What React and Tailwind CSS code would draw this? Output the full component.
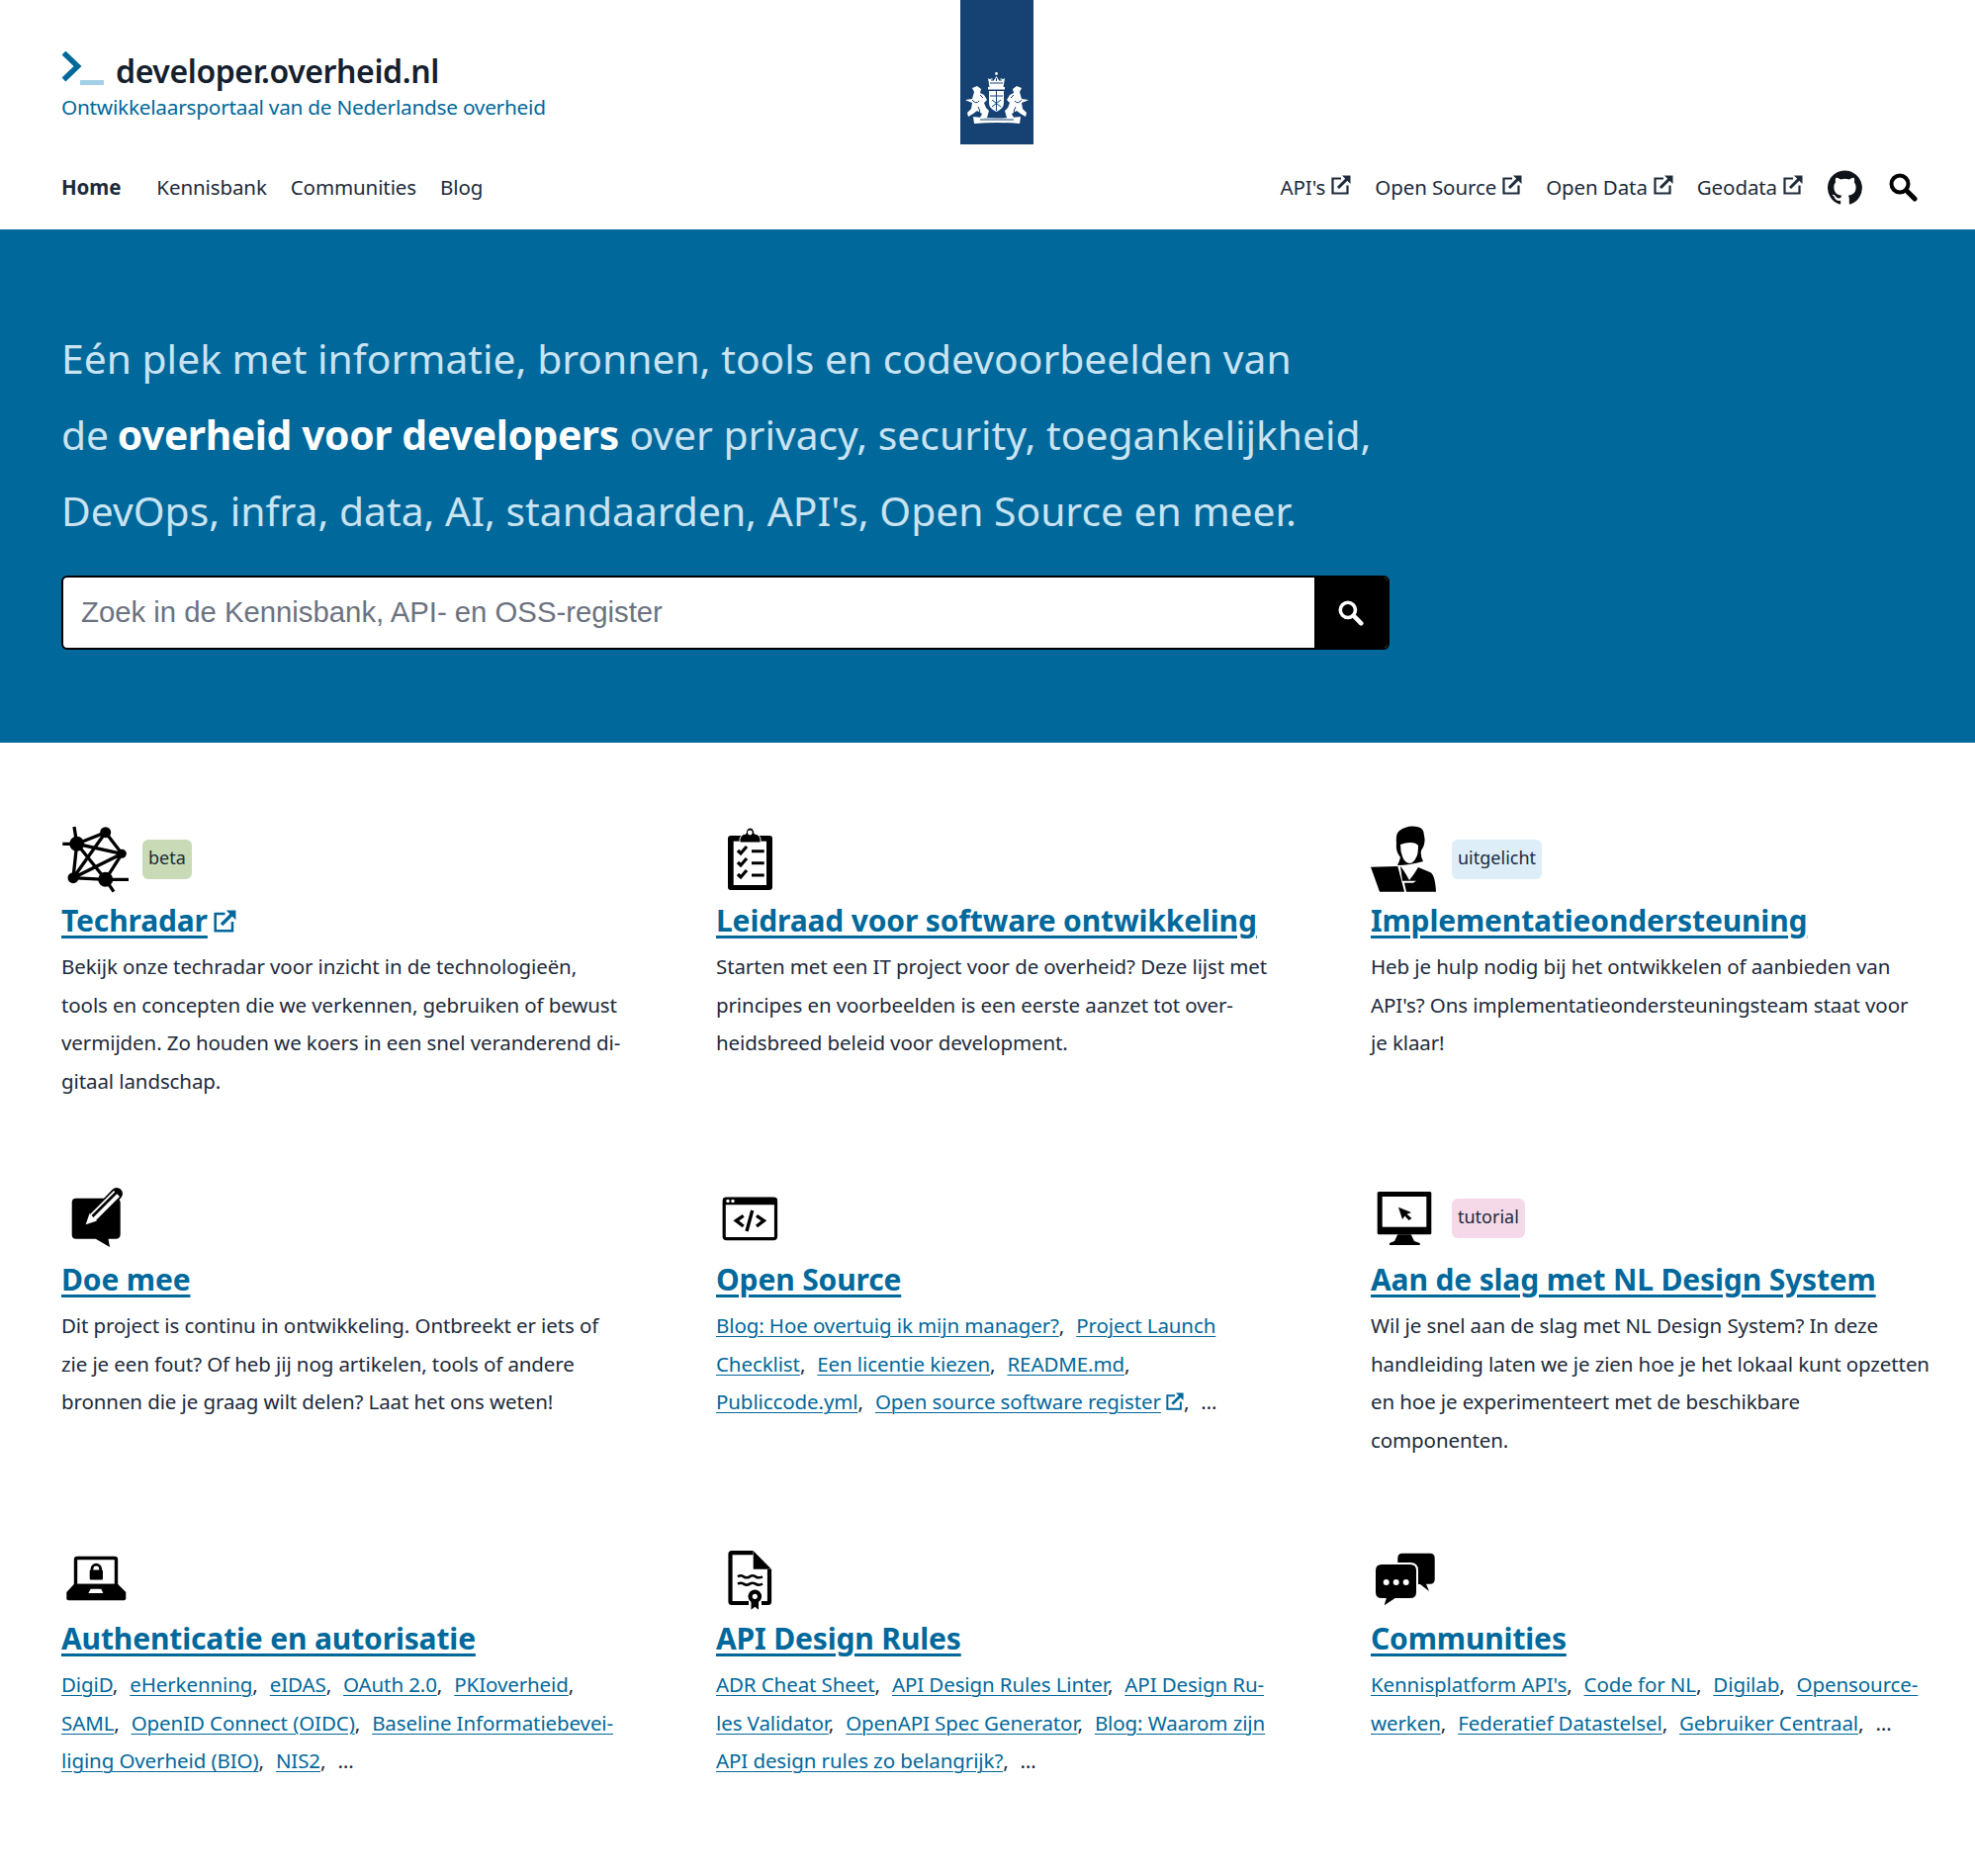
import React from "react";

const ExtIcon = ({ className = "" }) => (
  <svg viewBox="0 0 20 20" className={className} fill="none" stroke="currentColor">
    <path d="M10 3.500H1.500V18.500H16.500V10.500" strokeWidth="2.200" />
    <path d="M7 13L16 4" strokeWidth="3" />
    <path d="M11 0.500H19.500V9Z" fill="currentColor" stroke="none" />
  </svg>
);

const SearchIcon = ({ className = "" }) => (
  <svg viewBox="0 0 29 29" className={className} fill="none" stroke="currentColor">
    <circle cx="11" cy="11" r="8.500" strokeWidth="4" />
    <path d="M17.500 17.500L26 26" strokeWidth="5" strokeLinecap="round" />
  </svg>
);

const GithubIcon = ({ className = "" }) => (
  <svg viewBox="0 0 24 24" className={className} fill="currentColor">
    <path d="M12 .3a12 12 0 0 0-3.800 23.380c.6.120.830-.260.830-.570l-.020-2.050c-3.340.720-4.040-1.610-4.040-1.610-.550-1.390-1.330-1.760-1.330-1.760-1.090-.740.080-.730.080-.730 1.200.090 1.840 1.240 1.840 1.240 1.070 1.830 2.810 1.300 3.500 1 .1-.780.420-1.310.760-1.610-2.670-.3-5.470-1.330-5.470-5.930 0-1.310.470-2.380 1.240-3.220-.140-.3-.540-1.520.1-3.180 0 0 1-.320 3.300 1.230a11.500 11.500 0 0 1 6 0c2.280-1.550 3.290-1.230 3.290-1.230.640 1.660.240 2.880.120 3.180a4.650 4.650 0 0 1 1.230 3.220c0 4.610-2.800 5.630-5.480 5.920.420.360.810 1.100.810 2.220l-.010 3.290c0 .310.2.690.820.570A12 12 0 0 0 12 .3" />
  </svg>
);

const Crest = () => (
  <svg viewBox="0 0 74 146" className="h-[146px] w-[74px]">
    <rect width="74" height="146" fill="#154273" />
    <g fill="#fff">
      <circle cx="36.500" cy="74.500" r="1.400" />
      <path d="M28 79q2 2 4 0l1.500 3 3-5 3 5 1.500-3q2 2 4 0l-1.500 9h-14z" />
      <rect x="28" y="88" width="17" height="2.500" />
      <path d="M29 92h15v12q0 6-7.500 9q-7.500-3-7.500-9z" />
      <path d="M5 101l7-1 2-7-2-4 5-2 4 3-1 4 4 2 3 5-3 3 2 5 3 3-2 7h-7l2-4-5-3-4 3-5 3-1-4 4-4 1-6-5-2z" />
      <path d="M69 101l-7-1-2-7 2-4-5-2-4 3 1 4-4 2-3 5 3 3-2 5-3 3 2 7h7l-2-4 5-3 4 3 5 3 1-4-4-4-1-6 5-2z" />
      <path d="M13 118q24 3 48 0l-1 7q-23-2-46 0z" />
    </g>
    <g stroke="#154273" strokeWidth="1" fill="none">
      <path d="M30 84h13M32 82v-2M36.500 82v-3M41 82v-2" />
      <path d="M30 97h13M36.500 92v20M32 101l9 7M41 101l-9 7" />
      <path d="M12 101q4 5 7 1M62 101q-4 5-7 1M18 108q3 4 1 8M56 108q-3 4-1 8M20 96l3 3M54 96l-3 3" />
      <path d="M20 121h34" />
    </g>
  </svg>
);

const base = { viewBox: "0 0 68 68", className: "h-[68px] w-[68px] shrink-0" };

const RadarIcon = () => (
  <svg {...base} fill="#000">
    <g stroke="#000" strokeWidth="3.300" fill="none">
      <path d="M15.700 18.300L44.700 6.700L61.300 28.300L44.700 54.300L12 52.700L15.700 18.300L61.300 28.300L12 52.700L44.700 6.700M15.700 18.300L44.700 54.300" />
      <path d="M15.700 18.300L13 1M15.700 18.300H1.300M44.700 54.300H68M44.700 54.300L53 66.700" />
    </g>
    <circle cx="15.700" cy="18.300" r="7.500" />
    <circle cx="44.700" cy="6.700" r="5.500" />
    <circle cx="61.300" cy="28.300" r="4.500" />
    <circle cx="12" cy="52.700" r="5.500" />
    <circle cx="44.700" cy="54.300" r="7.500" />
  </svg>
);

const ClipboardIcon = () => (
  <svg {...base}>
    <rect x="12" y="10" width="45" height="55" rx="3" fill="#000" />
    <rect x="17.700" y="15.700" width="33.300" height="44.300" fill="#fff" />
    <path d="M24 17q-1-8 6-9q1-6 4.500-6t4.500 6q7 1 6 9z" fill="#000" stroke="#fff" strokeWidth="1" />
    <circle cx="34.300" cy="7" r="2.400" fill="#fff" />
    <path d="M22 25l3 3 6-7M22 37l3 3 6-7M22 49l3 3 6-7" stroke="#000" strokeWidth="3.200" fill="none" />
    <path d="M36 25.700h12.700M36 37.700h12.700M36 50h12.700" stroke="#000" strokeWidth="3" />
  </svg>
);

const PersonIcon = () => (
  <svg {...base}>
    <path d="M27 40q2-4 3-8q-5-6-4-14q-1-10 3-13q8-6 18-4q7 1 7 9q2 8-3 15q-1 6 2 11q-14 4-26 4z" fill="#000" />
    <path d="M30 19q5-2 10-2q6 0 8 3q0 9-2 12q-3 6-7 6q-5-1-7-7q-2-5-2-12z" fill="#fff" />
    <path d="M0 41.700L27.300 41L34 66.700H9z" fill="#000" />
    <path d="M30 41q3 3 9 14q5-6 9-13l12 5q5 2 6 19.700H36l-2-9h9l3-2H32z" fill="#000" />
  </svg>
);

const EditIcon = () => (
  <svg {...base}>
    <path d="M15 13.700H55q4.700 0 4.700 4.700V50q0 4.700-4.700 4.700H47.500L49 63L34.700 54.700H15q-4.300 0-4.300-4.300V18q0-4.300 4.300-4.300z" fill="#000" />
    <path d="M34 32L56 9" stroke="#000" strokeWidth="12" strokeLinecap="round" />
    <path d="M32 33L56 9" stroke="#fff" strokeWidth="8.500" />
    <path d="M31 32.500L56.500 7" stroke="#000" strokeWidth="2.600" />
    <path d="M24.700 40.300L28.500 29L36 36.500z" fill="#fff" />
  </svg>
);

const CodeIcon = () => (
  <svg {...base}>
    <rect x="8.200" y="14" width="52.300" height="40.700" rx="2.500" fill="#fff" stroke="#000" strokeWidth="3.200" />
    <path d="M7 20.300V15q0-2 2-2h50.700q2 0 2 2v5.300z" fill="#000" />
    <circle cx="12" cy="16.500" r="1.700" fill="#fff" />
    <circle cx="17" cy="16.500" r="1.700" fill="#fff" />
    <path d="M27.700 31.300L20.300 36.300L27.700 42M41 31.300L48.400 36.300L41 42M36.700 26L31 47" stroke="#000" strokeWidth="3.400" fill="none" />
  </svg>
);

const MonitorIcon = () => (
  <svg {...base}>
    <rect x="6.700" y="7" width="54.600" height="43.300" rx="1.500" fill="#000" />
    <rect x="11.700" y="12" width="44.600" height="30.700" fill="#fff" />
    <path d="M27.300 50.300H40.700L44 57L49.700 59V61H19V59L24 57z" fill="#000" />
    <path d="M28 22.700L41 28L36.500 29.800L41.500 34L38.500 36L34.500 31.500L32 35z" fill="#000" />
  </svg>
);

const LaptopIcon = () => (
  <svg {...base}>
    <rect x="14.500" y="14.500" width="41" height="28" rx="1.500" fill="#fff" stroke="#000" strokeWidth="3.400" />
    <path d="M13 40.700H57L65.300 49V55.300q0 2-2 2H7.300q-2 0-2-2V49z" fill="#000" />
    <path d="M29.700 45.700H40.300L42.300 50H27.300z" fill="#fff" />
    <rect x="28.700" y="26.500" width="13.300" height="10" rx="1" fill="#000" />
    <path d="M31 27v-1.500a4.300 4.300 0 0 1 8.600 0V27" stroke="#000" strokeWidth="2.800" fill="none" />
  </svg>
);

const DocIcon = () => (
  <svg {...base}>
    <path d="M37.500 9.200H16q-1.500 0-1.500 1.500V58.500q0 1.500 1.500 1.500H33M54 26V58.500q0 1.500-1.500 1.500H46" stroke="#000" strokeWidth="4.200" fill="none" />
    <path d="M37.700 7.300L56 25.700H37.700z" fill="#000" />
    <path d="M22 33.300q3-2 6 0t6 0t6 0t7 0M22 40.700q3-2 6 0t6 0t6 0t7 0" stroke="#000" strokeWidth="2.600" fill="none" />
    <path d="M35.500 56L35.500 66.700L39.300 63.700L43 66.700V56z" fill="#000" />
    <circle cx="39.300" cy="53.300" r="6.800" fill="#000" />
    <circle cx="39.300" cy="53.300" r="2.600" fill="#fff" />
  </svg>
);

const ChatIcon = () => (
  <svg {...base}>
    <path d="M32 9.700H60q4.700 0 4.700 4.700V36q0 4.700-4.700 4.700h-4L59 48L50 41H32q-4.700 0-4.700-4.700V14.400q0-4.700 4.700-4.700z" fill="#000" />
    <path d="M11 20H40q7 0 7 7V49q0 7-7 7H25L12 64.500L14.500 56H11q-7 0-7-7V27q0-7 7-7z" fill="#000" stroke="#fff" strokeWidth="2" />
    <circle cx="15.700" cy="39" r="3" fill="#fff" />
    <circle cx="25.700" cy="39" r="3" fill="#fff" />
    <circle cx="35.700" cy="39" r="3" fill="#fff" />
  </svg>
);

const L = ({ children, ext }) => (
  <a href="#" className="text-[#01689b] underline decoration-1 underline-offset-[3px]">
    {children}
    {ext && <ExtIcon className="ml-[5px] inline-block h-[18px] w-[18px] align-[-1px]" />}
  </a>
);

const Sep = () => <span className="mr-[12px]">,</span>;

const Badge = ({ color, children }) => (
  <span className={`flex h-10 items-center rounded-md px-[6px] pb-[3px] text-[18px] ${color}`}>{children}</span>
);

const Card = ({ icon, badge, title, ext, children }) => (
  <article className="w-[580px]">
    <div className="flex h-[68px] items-center gap-[14px]">
      {icon}
      {badge}
    </div>
    <h2 className="mt-2 flex h-10 items-center text-[30px] leading-10 font-bold tracking-[-0.15px] text-[#01689b]">
      <a href="#" className="underline decoration-[3px] underline-offset-[4px]">{title}</a>
      {ext && <ExtIcon className="ml-[6px] h-[23px] w-[23px]" />}
    </h2>
    <div className="mt-[7px] text-[20.5px] leading-[38.7px] tracking-[-0.1px]">{children}</div>
  </article>
);

const NavExt = ({ children }) => (
  <a href="#" className="flex items-center gap-[6px]">
    {children}
    <ExtIcon className="mb-[5px] h-[20px] w-[20px]" />
  </a>
);

export default function App() {
  return (
    <div className="min-h-[1897px] bg-white font-['Noto_Sans',sans-serif] text-[#1c2a3a]">
      <header className="h-[232px] px-[62px]">
        <div className="flex h-[146px]">
          <div className="w-[909px] shrink-0">
            <div className="mt-[52px] flex h-[38px] items-start">
              <svg viewBox="0 0 44 35" className="h-[35px] w-[44px] shrink-0">
                <path d="M2.500 1.500L16.500 15L2.500 28.500" fill="none" stroke="#01689b" strokeWidth="5.500" />
                <rect x="19" y="29" width="24" height="5" fill="#a3d0e7" />
              </svg>
              <span className="ml-[11px] mt-[-3px] text-[32px] leading-[46px] font-semibold tracking-[-0.4px] text-[#15202e]">
                developer.overheid.nl
              </span>
            </div>
            <p className="mt-[3px] text-[20.8px] leading-[30px] tracking-[-0.25px] text-[#01689b]">
              Ontwikkelaarsportaal van de Nederlandse overheid
            </p>
          </div>
          <Crest />
        </div>
        <nav className="flex h-[86px] items-center text-[20.5px] tracking-[-0.1px]">
          <a href="#" className="mr-[36px] font-bold">Home</a>
          <div className="flex gap-6">
            <a href="#">Kennisbank</a>
            <a href="#">Communities</a>
            <a href="#">Blog</a>
          </div>
          <div className="ml-auto mr-[-4px] flex items-center gap-6">
            <NavExt>API's</NavExt>
            <NavExt>Open Source</NavExt>
            <NavExt>Open Data</NavExt>
            <NavExt>Geodata</NavExt>
            <GithubIcon className="ml-[1px] h-[35px] w-[35px] text-[#10141a]" />
            <SearchIcon className="ml-[3px] h-[29px] w-[29px] text-black" />
          </div>
        </nav>
      </header>

      <section className="h-[519px] bg-[#01689b] px-[62px] pt-[92px]">
        <h1 className="text-[40.8px] leading-[77px] font-normal text-[#c9e3f1]">
          Eén plek met informatie, bronnen, tools en codevoorbeelden van
          <br />
          de <strong className="ml-[-2px] font-bold tracking-[-0.4px] text-white">overheid voor developers</strong> over privacy, security, toegankelijkheid,
          <br />
          DevOps, infra, data, AI, standaarden, API's, Open Source en meer.
        </h1>
        <div className="mt-[27px] flex h-[75px] w-[1343px] overflow-hidden rounded-md border-2 border-black bg-white">
          <input
            type="text"
            placeholder="Zoek in de Kennisbank, API- en OSS-register"
            className="min-w-0 flex-1 px-[18px] pb-[2px] font-['Liberation_Sans',sans-serif] text-[29.3px] outline-none placeholder:text-[#6b7280]"
          />
          <button className="flex w-[74px] items-center justify-center bg-black text-white">
            <SearchIcon className="h-[26px] w-[26px]" />
          </button>
        </div>
      </section>

      <main className="grid grid-cols-[repeat(3,662px)] grid-rows-[363px_363px_auto] px-[62px] pt-[84px]">
        <Card
          icon={<RadarIcon />}
          badge={<Badge color="bg-[#c8dbb6]">beta</Badge>}
          title="Techradar"
          ext
        >
          Bekijk onze techradar voor inzicht in de technologieën,
          <br />
          tools en concepten die we verkennen, gebruiken of bewust
          <br />
          vermijden. Zo houden we koers in een snel veranderend di-
          <br />
          gitaal landschap.
        </Card>
        <Card icon={<ClipboardIcon />} title="Leidraad voor software ontwikkeling">
          Starten met een IT project voor de overheid? Deze lijst met
          <br />
          principes en voorbeelden is een eerste aanzet tot over-
          <br />
          heidsbreed beleid voor development.
        </Card>
        <Card
          icon={<PersonIcon />}
          badge={<Badge color="bg-[#ddeef8]">uitgelicht</Badge>}
          title="Implementatieondersteuning"
        >
          Heb je hulp nodig bij het ontwikkelen of aanbieden van
          <br />
          API's? Ons implementatieondersteuningsteam staat voor
          <br />
          je klaar!
        </Card>

        <Card icon={<EditIcon />} title="Doe mee">
          Dit project is continu in ontwikkeling. Ontbreekt er iets of
          <br />
          zie je een fout? Of heb jij nog artikelen, tools of andere
          <br />
          bronnen die je graag wilt delen? Laat het ons weten!
        </Card>
        <Card icon={<CodeIcon />} title="Open Source">
          <L>Blog: Hoe overtuig ik mijn manager?</L><Sep />
          <L>Project Launch<br />Checklist</L><Sep />
          <L>Een licentie kiezen</L><Sep />
          <L>README.md</L>,
          <br />
          <L>Publiccode.yml</L><Sep />
          <L ext>Open source software register</L><Sep />
          …
        </Card>
        <Card
          icon={<MonitorIcon />}
          badge={<Badge color="bg-[#f6d9e9]">tutorial</Badge>}
          title="Aan de slag met NL Design System"
        >
          Wil je snel aan de slag met NL Design System? In deze
          <br />
          handleiding laten we je zien hoe je het lokaal kunt opzetten
          <br />
          en hoe je experimenteert met de beschikbare
          <br />
          componenten.
        </Card>

        <Card icon={<LaptopIcon />} title="Authenticatie en autorisatie">
          <L>DigiD</L><Sep />
          <L>eHerkenning</L><Sep />
          <L>eIDAS</L><Sep />
          <L>OAuth 2.0</L><Sep />
          <L>PKIoverheid</L>,
          <br />
          <L>SAML</L><Sep />
          <L>OpenID Connect (OIDC)</L><Sep />
          <L>Baseline Informatiebevei-<br />liging Overheid (BIO)</L><Sep />
          <L>NIS2</L><Sep />
          …
        </Card>
        <Card icon={<DocIcon />} title="API Design Rules">
          <L>ADR Cheat Sheet</L><Sep />
          <L>API Design Rules Linter</L><Sep />
          <L>API Design Ru-<br />les Validator</L><Sep />
          <L>OpenAPI Spec Generator</L><Sep />
          <L>Blog: Waarom zijn<br />API design rules zo belangrijk?</L><Sep />
          …
        </Card>
        <Card icon={<ChatIcon />} title="Communities">
          <L>Kennisplatform API's</L><Sep />
          <L>Code for NL</L><Sep />
          <L>Digilab</L><Sep />
          <L>Opensource-<br />werken</L><Sep />
          <L>Federatief Datastelsel</L><Sep />
          <L>Gebruiker Centraal</L><Sep />
          …
        </Card>
      </main>
    </div>
  );
}
